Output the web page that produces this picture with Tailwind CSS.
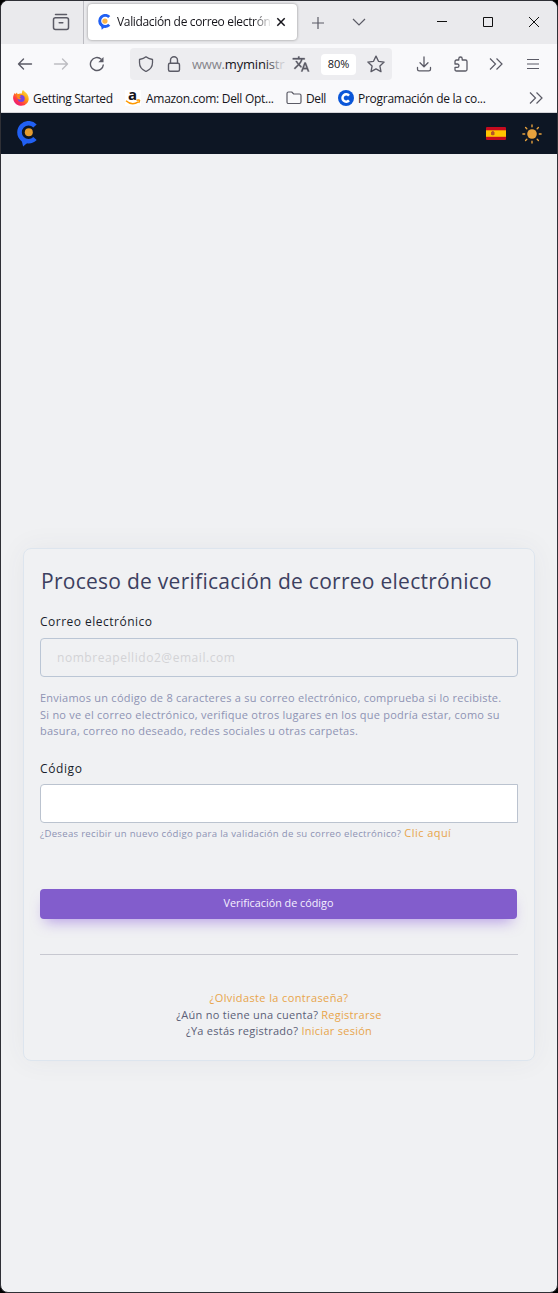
<!DOCTYPE html>
<html lang="es">
<head>
<meta charset="utf-8">
<title>Validación de correo electrónico</title>
<script src="https://cdn.jsdelivr.net/npm/@tailwindcss/browser@4"></script>
</head>
<body class="bg-black">
<div class="flex flex-col w-[558px] h-[1293px] border border-[#2f3036] rounded-lg overflow-hidden bg-[#f0f1f3] font-['Open_Sans',sans-serif] whitespace-nowrap">

  <!-- Tab strip -->
  <div class="flex h-[43px] shrink-0 bg-[#eaeaed] text-[#15141a]">
    <div class="flex w-[83px] h-full border-r border-[#bcbcc2] pl-[51px] pt-3">
      <svg class="size-[18px]" viewBox="0 0 18 18" fill="none" stroke="#5b5b66" stroke-width="1.5" stroke-linecap="round"><path d="M3.5 1.5h11"/><rect x="1.5" y="4.8" width="15" height="11.7" rx="2"/><path d="M7.2 9.8h3.6"/></svg>
    </div>
    <div class="flex items-center w-[209px] h-9 mt-[3px] ml-1 pl-[9px] bg-white rounded shadow-[0_0_3px_rgba(0,0,0,0.4)]">
      <svg class="w-[14px] h-4 shrink-0" viewBox="0 0 22 26"><path d="M19.500 5A9 9 0 1 0 19.500 17.500" fill="none" stroke="#2160f3" stroke-width="4.800"/><path d="M6 18l1.400 7.500L14 20z" fill="#2160f3"/><circle cx="12.500" cy="11.500" r="4.300" fill="#fdb548"/></svg>
      <span class="ml-[6px] w-[155px] overflow-hidden text-[12px] tracking-[-0.34px] bg-linear-to-r from-[#15141a] from-88% to-transparent bg-clip-text text-transparent">Validación de correo electróni</span>
      <svg class="size-[10px] ml-1" viewBox="0 0 10 10" stroke="#15141a" stroke-width="1.500"><path d="M1.300 1.300l7.400 7.400M8.700 1.300L1.300 8.700"/></svg>
    </div>
    <svg class="size-3 ml-[15px] mt-4" viewBox="0 0 12 12" stroke="#5b5b66" stroke-width="1.200"><path d="M6 0v12M0 6h12"/></svg>
    <svg class="w-[14px] h-3 ml-7 mt-[15px]" viewBox="0 0 14 12" fill="none" stroke="#5b5b66" stroke-width="1.200"><path d="M1 3l6 6 6-6"/></svg>
    <svg class="w-[10px] h-[10px] ml-[71px] mt-4" viewBox="0 0 10 10" stroke="#111"><path d="M0 4.500h10"/></svg>
    <svg class="w-[10px] h-[10px] ml-9 mt-4" viewBox="0 0 10 10" fill="none" stroke="#111"><path d="M.5.5h9v9h-9z"/></svg>
    <svg class="w-[10px] h-[10px] ml-9 mt-4" viewBox="0 0 10 10" stroke="#111"><path d="M0 0l10 10M10 0L0 10"/></svg>
  </div>

  <!-- Navigation bar -->
  <div class="flex items-center h-10 shrink-0 bg-[#f9f9fb] text-[#15141a]">
    <svg class="size-4 ml-4" viewBox="0 0 16 16" fill="none" stroke="#5b5b66" stroke-width="1.400" stroke-linecap="round" stroke-linejoin="round"><path d="M14.500 8H1.500M6.500 3l-5 5 5 5"/></svg>
    <svg class="size-4 ml-5" viewBox="0 0 16 16" fill="none" stroke="#bdbdc2" stroke-width="1.400" stroke-linecap="round" stroke-linejoin="round"><path d="M1.500 8h13M9.500 3l5 5-5 5"/></svg>
    <svg class="size-4 ml-5" viewBox="0 0 16 16" fill="none" stroke="#5b5b66" stroke-width="1.400"><path d="M14.400 8.500A6.500 6.500 0 1 1 12.300 3.200"/><path d="M14.500 1v5.300H9.300z" fill="#5b5b66" stroke="none"/></svg>
    <div class="flex items-center w-[262px] h-8 ml-[25px] pl-2 rounded bg-[#ededf0]">
      <svg class="size-4 shrink-0" viewBox="0 0 16 16" fill="none" stroke="#5b5b66" stroke-width="1.300" stroke-linejoin="round"><path d="M8 .8c2 1.700 4 2.200 6.500 2.700v3.300c0 4-2.500 7-6.500 8.700-4-1.700-6.500-4.700-6.500-8.700V3.500C4 3 6 2.500 8 .8z"/></svg>
      <svg class="size-4 shrink-0 ml-3" viewBox="0 0 16 16" fill="none" stroke="#5b5b66" stroke-width="1.400"><rect x="2.500" y="7.200" width="11" height="8" rx="1.500"/><path d="M4.500 7V4.200a3.500 3.500 0 0 1 7 0V7"/></svg>
      <span class="ml-[10px] mt-0.5 w-[94px] overflow-hidden text-[13px] tracking-[-0.2px]"><span class="text-[#85858b]">www.</span><span class="text-[#15141a]">mymin</span><span class="text-[#3a3940]">i</span><span class="text-[#626168]">s</span><span class="text-[#a0a0a5]">t</span><span class="text-[#ccccd0]">r</span></span>
      <svg class="size-[18px] shrink-0 ml-[6px]" viewBox="0 0 24 24" fill="#5b5b66" stroke="#5b5b66" stroke-width=".4"><path d="M12.870 15.070l-2.540-2.510.03-.03A17.520 17.520 0 0 0 14.070 6H17V4h-7V2H8v2H1v2h11.170C11.500 7.920 10.440 9.750 9 11.350 8.070 10.320 7.300 9.190 6.690 8h-2c.73 1.630 1.730 3.170 2.980 4.560l-5.090 5.020L4 19l5-5 3.110 3.110.76-2.040zM18.500 10h-2L12 22h2l1.120-3h4.750L21 22h2l-4.500-12zm-2.620 7l1.620-4.330L19.120 17h-3.240z"/></svg>
      <span class="flex items-center justify-center w-[35px] h-[21px] ml-[11px] rounded-sm bg-white text-[11px] pt-px">80%</span>
      <svg class="size-[18px] ml-[11px]" viewBox="0 0 16 16" fill="none" stroke="#5b5b66" stroke-width="1.200" stroke-linejoin="round"><path d="M8 1l2.200 4.600 5 .7-3.700 3.500.9 5L8 12.400l-4.400 2.400.9-5L.8 6.300l5-.7z"/></svg>
    </div>
    <svg class="w-4 h-4 ml-[24px]" viewBox="0 0 16 16" fill="none" stroke="#5b5b66" stroke-width="1.300" stroke-linecap="round" stroke-linejoin="round"><path d="M8 1v9.500M4 6.800l4 4 4-4M1.500 11.500v1.700c0 1 .7 1.700 1.700 1.700h9.600c1 0 1.700-.7 1.700-1.700v-1.700"/></svg>
    <svg class="w-4 h-4 ml-[21px]" viewBox="0 0 16 16" fill="none" stroke="#5b5b66" stroke-width="1.300" stroke-linejoin="round"><path d="M2 8V5.500C2 4.500 2.500 4 3.500 4h2.300V2.700a1.700 1.700 0 0 1 3.400 0V4h3.300c1 0 1.500.5 1.500 1.500v8c0 1-.5 1.500-1.500 1.500h-9c-1 0-1.500-.5-1.500-1.500v-2.200h2.300a1.650 1.650 0 0 0 0-3.300z"/></svg>
    <svg class="w-[14px] h-3 ml-5" viewBox="0 0 14 12" fill="none" stroke="#5b5b66" stroke-width="1.200"><path d="M1 .5L6.500 6 1 11.500M7.500.5L13 6l-5.500 5.500"/></svg>
    <svg class="w-3 h-3 ml-6" viewBox="0 0 12 12" stroke="#5b5b66" stroke-width="1.200"><path d="M0 1.500h12M0 6h12M0 10.500h12"/></svg>
  </div>

  <!-- Bookmarks bar -->
  <div class="flex items-center h-[29px] shrink-0 bg-[#f9f9fb] border-b border-[#d4d4d8] text-[#15141a] text-[12px] leading-4">
    <svg class="size-4 ml-3" viewBox="0 0 16 16"><defs><linearGradient id="fx" x1="1" y1="0" x2="0.200" y2="1"><stop offset="0" stop-color="#fff44f"/><stop offset=".45" stop-color="#ff980e"/><stop offset=".75" stop-color="#ff3647"/><stop offset="1" stop-color="#e31587"/></linearGradient></defs><path d="M10 0c1 1.500 3 2.300 4.300 4.200 2 3.200 1.900 6.500-.3 9A8 8 0 0 1 .2 9C-.2 6.500.8 4 2 2.700l.3 1.600L4 2.500l.5 1.800C6.500 3 8.500 3.500 9 3.500 8.700 2 9.300.8 10 0z" fill="url(#fx)"/><circle cx="8.200" cy="8.600" r="3.500" fill="#7542e5"/><path d="M3.500 5.200c2-.7 3.500 0 4.800 1-1.500.2-1.800 1-1.700 1.800l1.700.7C6.500 10.500 4 9 3.500 5.200z" fill="#ff8a16"/></svg>
    <span class="ml-1 mt-px w-[81px] tracking-[-0.34px]">Getting Started</span>
    <div class="relative ml-[11px] size-4 bg-white">
      <span class="absolute left-[3px] top-[-4px] text-[15px] leading-4 font-bold">a</span>
      <svg class="absolute inset-0 size-4" viewBox="0 0 16 16" fill="none" stroke="#ff9900" stroke-width="1.500"><path d="M1 10.700c4 3.600 8.500 3.700 12.300 1.100M11.500 10.300c2-.5 3.300-.3 3 .3-.1.800-.4 1.600-.9 2.200"/></svg>
    </div>
    <span class="ml-[5px] mt-px w-[129px] tracking-[-0.28px]">Amazon.com: Dell Opt...</span>
    <svg class="w-4 h-4 ml-[11px]" viewBox="0 0 16 16" fill="none" stroke="#5b5b66" stroke-width="1.200" stroke-linejoin="round"><path d="M1 12V3.500C1 2.500 1.700 2 2.500 2h3.200l2 2h5.800c.9 0 1.500.6 1.500 1.500V12c0 .9-.6 1.500-1.500 1.500h-11C1.600 13.500 1 12.900 1 12z"/></svg>
    <span class="ml-1 mt-px w-5 tracking-[-0.4px]">Dell</span>
    <svg class="size-4 ml-3" viewBox="0 0 16 16"><circle cx="8" cy="8" r="8" fill="#0a56d8"/><path d="M11 5.600a3.700 3.700 0 1 0 0 4.800" fill="none" stroke="#fff" stroke-width="2.500"/></svg>
    <span class="ml-1 mt-px w-[129px] tracking-[-0.27px]">Programación de la co...</span>
    <svg class="w-[14px] h-3 ml-[42px]" viewBox="0 0 14 12" fill="none" stroke="#5b5b66" stroke-width="1.200"><path d="M1 .5L6.500 6 1 11.500M7.500.5L13 6l-5.500 5.500"/></svg>
  </div>

  <!-- Site header -->
  <header class="flex items-center justify-between h-[41px] shrink-0 bg-[#0d1624] pl-[15px] pr-[15px]">
    <svg class="w-[22px] h-[26px]" viewBox="0 0 22 26"><path d="M19.800 5A9 9 0 1 0 19.800 17.500" fill="none" stroke="#2160f3" stroke-width="4.600" transform="translate(-.8)"/><path d="M5.500 19l1.600 6.500L13.500 20z" fill="#2160f3"/><circle cx="12.800" cy="11.300" r="4" fill="#e59c2f"/></svg>
    <div class="flex items-center gap-4">
      <svg class="w-5 h-[13px]" viewBox="0 0 20 13"><rect width="20" height="13" rx="1" fill="#c60b1e"/><rect y="3.300" width="20" height="6.500" fill="#ffc400"/><path d="M5 5h3.500v2.500c0 1-3.500 1-3.500 0z" fill="#b5522a"/><path d="M5.800 4.400h2" stroke="#b5522a"/></svg>
      <svg class="size-5" viewBox="0 0 20 20" fill="#e8a23d" stroke="#e8a23d" stroke-width="1.400" stroke-linecap="round"><circle cx="10" cy="10" r="4.800" stroke="none"/><path d="M10 .9v1.800M10 17.300v1.800M.9 10h1.800M17.300 10h1.800M3.600 3.600l1.200 1.200M15.200 15.200l1.200 1.200M3.600 16.400l1.200-1.200M15.200 4.800l1.200-1.200"/></svg>
    </div>
  </header>

  <!-- Verification card -->
  <main class="flex flex-col w-[512px] h-[513px] mt-[394px] ml-[22px] px-4 border border-[#dde5ee] rounded-lg shadow-[0_0_28px_rgba(60,60,80,0.06)]">
    <h1 class="mt-[16px] pl-px text-[21px] leading-8 tracking-[0.27px] text-[#3c4060]">Proceso de verificación de correo electrónico</h1>
    <label class="mt-[17px] text-[12px] leading-4 tracking-[0.49px] text-[#191e2c]">Correo electrónico</label>
    <div class="flex items-center w-[478px] h-[39px] mt-2 pl-4 border border-[#bbc6d5] rounded text-[12px] tracking-[0.56px] text-[#d3d3d6]">nombreapellido2@email.com</div>
    <p class="mt-[13px] text-[11px] leading-[16.5px] tracking-[0.24px] text-[#8e93b4]">Enviamos un código de 8 caracteres a su correo electrónico, comprueba si lo recibiste.<br>Si no ve el correo electrónico, verifique otros lugares en los que podría estar, como su<br>basura, correo no deseado, redes sociales u otras carpetas.</p>
    <label class="mt-[21px] text-[12px] leading-4 tracking-[0.6px] text-[#191e2c]">Código</label>
    <div class="w-[478px] h-[39px] shrink-0 mt-[7px] border border-[#bbc3cf] rounded-l bg-white"></div>
    <p class="flex items-baseline gap-[3px] h-4 pt-[2px] leading-4 text-[9.6px] tracking-[0.29px] text-[#8e93b4]">¿Deseas recibir un nuevo código para la validación de su correo electrónico? <a class="text-[11px] tracking-[0.45px] text-[#e8a54b]">Clic aquí</a></p>
    <div class="flex items-center justify-center w-[477px] h-[30px] shrink-0 mt-[50px] rounded bg-[#825dcc] text-[10.8px] text-[#f5f0ff] shadow-[0_8px_14px_-5px_rgba(130,80,220,0.5)]">Verificación de código</div>
    <hr class="w-[478px] mt-[35px] border-[#c7c8d0]">
    <div class="w-[478px] mt-[35.5px] text-center text-[11px] leading-[16.5px] tracking-[0.27px] text-[#5b5f77]">
      <a class="tracking-[0.38px] text-[#e8a54b]">¿Olvidaste la contraseña?</a><br>¿Aún no tiene una cuenta? <a class="text-[#e8a54b]">Registrarse</a><br>¿Ya estás registrado? <a class="text-[#e8a54b]">Iniciar sesión</a>
    </div>
  </main>
</div>
</body>
</html>
